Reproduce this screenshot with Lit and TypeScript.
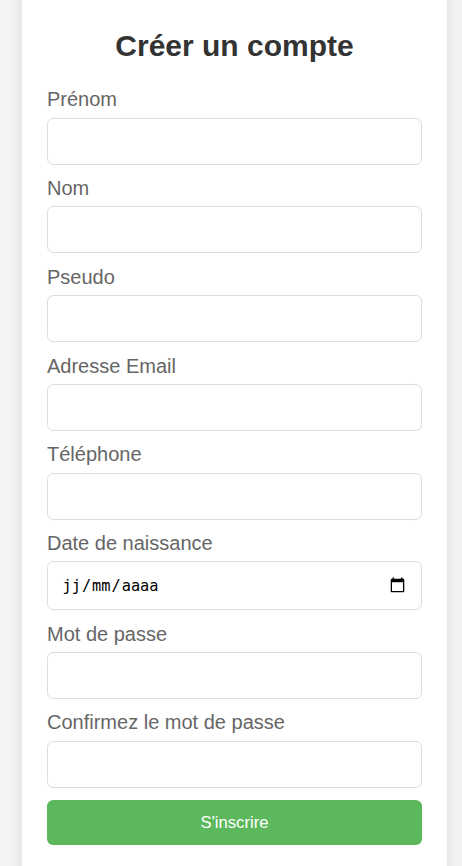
import { LitElement, html, css } from "lit";
import { customElement } from "lit/decorators.js";

@customElement("app-root")
export class AppRoot extends LitElement {
  static styles = css`
    :host {
      display: block;
      box-sizing: border-box;
      height: 866px;
      overflow: hidden;
      padding: 0 15px 0 22px;
      background: #f3f3f3;
      font-family: "Liberation Sans", Arial, sans-serif;
    }
    * {
      box-sizing: border-box;
    }
    .card {
      height: 906px;
      margin-top: -20px;
      padding: 45px 25px 0;
      background: #fff;
      box-shadow: 0 0 12.5px rgba(0, 0, 0, 0.1);
    }
    h2 {
      margin: 0;
      height: 63.3px;
      padding-top: 4px;
      font-size: 30px;
      line-height: 34px;
      text-align: center;
      color: #333;
    }
    .field {
      height: 88.75px;
    }
    .field.date {
      height: 90.6px;
    }
    label {
      display: block;
      height: 29.3px;
      font-size: 20px;
      line-height: 23px;
      color: #666;
    }
    .field input,
    .datebox {
      display: block;
      width: 100%;
      height: 47px;
      margin: 0;
      padding: 12.5px;
      border: 1px solid #ddd;
      border-radius: 6.25px;
      background: #fff;
      outline: none;
      font-size: 16.67px;
    }
    .datebox {
      display: flex;
      align-items: center;
      justify-content: space-between;
      height: 48.7px;
      padding: 0 16px 0 13.5px;
      font-family: "DejaVu Sans Mono", monospace;
      font-size: 15.27px;
      color: #000;
    }
    .part {
      padding: 0 1px;
    }
    .calendar {
      display: block;
      width: 15px;
      height: 16px;
      margin-bottom: 2px;
    }
    button {
      display: block;
      width: 100%;
      height: 45px;
      margin: 0.3px 0 0;
      padding: 0;
      border: 0;
      border-radius: 6.25px;
      background: #5cb85c;
      color: #fff;
      font-family: inherit;
      font-size: 16.67px;
    }
  `;

  private field(id: string, label: string, type = "text") {
    return html`<div class="field">
      <label for=${id}>${label}</label>
      <input id=${id} type=${type} />
    </div>`;
  }

  render() {
    return html`<main class="card">
      <h2>Créer un compte</h2>
      ${this.field("prenom", "Prénom")}
      ${this.field("nom", "Nom")}
      ${this.field("pseudo", "Pseudo")}
      ${this.field("email", "Adresse Email", "email")}
      ${this.field("telephone", "Téléphone", "tel")}
      <div class="field date">
        <label>Date de naissance</label>
        <div class="datebox">
          <div><span class="part">jj</span>/<span class="part">mm</span>/<span class="part">aaaa</span></div>
          <svg class="calendar" viewBox="0 0 15 16">
            <path
              fill="#000"
              fill-rule="evenodd"
              d="M2.5 0.5h1.6v1.3h6.8V0.5h1.6v1.3h0.7q1.1 0 1.1 1.1v11.3q0 1.1-1.1 1.1H1.8q-1.1 0-1.1-1.1V2.9q0-1.1 1.1-1.1h0.7zM2 5.2v8.8h11V5.2z"
            />
          </svg>
        </div>
      </div>
      ${this.field("mdp", "Mot de passe", "password")}
      ${this.field("confirmation", "Confirmez le mot de passe", "password")}
      <button type="button">S'inscrire</button>
    </main>`;
  }
}
